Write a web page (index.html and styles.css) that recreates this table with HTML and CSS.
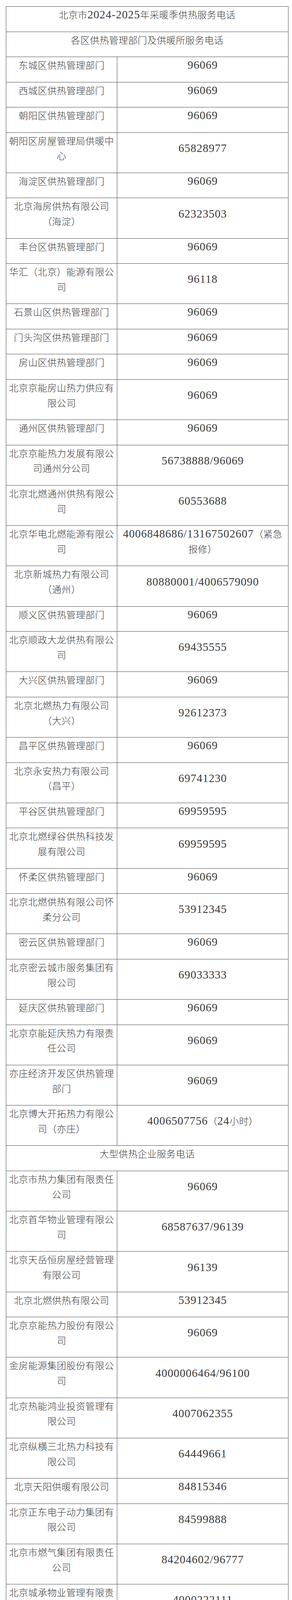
FILE: index.html
```html
<!DOCTYPE html>
<html lang="zh-CN">
<head>
<meta charset="utf-8">
<title>北京市2024-2025年采暖季供热服务电话</title>
<link rel="stylesheet" href="styles.css">
</head>
<body>
<div class="page">
<table class="phones">
<tbody>
<tr><td class="head" colspan="2">北京市<span class="n">2024-2025</span>年采暖季供热服务电话</td></tr>
<tr><td class="head" colspan="2">各区供热管理部门及供暖所服务电话</td></tr>
<tr><td class="name">东城区供热管理部门</td><td class="tel">96069</td></tr>
<tr><td class="name">西城区供热管理部门</td><td class="tel">96069</td></tr>
<tr><td class="name">朝阳区供热管理部门</td><td class="tel">96069</td></tr>
<tr><td class="name">朝阳区房屋管理局供暖中心</td><td class="tel">65828977</td></tr>
<tr><td class="name">海淀区供热管理部门</td><td class="tel">96069</td></tr>
<tr><td class="name">北京海房供热有限公司（海淀）</td><td class="tel">62323503</td></tr>
<tr><td class="name">丰台区供热管理部门</td><td class="tel">96069</td></tr>
<tr><td class="name">华汇（北京）能源有限公司</td><td class="tel">96118</td></tr>
<tr><td class="name">石景山区供热管理部门</td><td class="tel">96069</td></tr>
<tr><td class="name">门头沟区供热管理部门</td><td class="tel">96069</td></tr>
<tr><td class="name">房山区供热管理部门</td><td class="tel">96069</td></tr>
<tr><td class="name">北京京能房山热力供应有限公司</td><td class="tel">96069</td></tr>
<tr><td class="name">通州区供热管理部门</td><td class="tel">96069</td></tr>
<tr><td class="name">北京京能热力发展有限公司通州分公司</td><td class="tel">56738888/96069</td></tr>
<tr><td class="name">北京北燃通州供热有限公司</td><td class="tel">60553688</td></tr>
<tr><td class="name">北京华电北燃能源有限公司</td><td class="tel">4006848686/13167502607<span class="c">（紧急</span><span class="c">报修）</span></td></tr>
<tr><td class="name">北京新城热力有限公司（通州）</td><td class="tel">80880001/4006579090</td></tr>
<tr><td class="name">顺义区供热管理部门</td><td class="tel">96069</td></tr>
<tr><td class="name">北京顺政大龙供热有限公司</td><td class="tel">69435555</td></tr>
<tr><td class="name">大兴区供热管理部门</td><td class="tel">96069</td></tr>
<tr><td class="name">北京北燃热力有限公司（大兴）</td><td class="tel">92612373</td></tr>
<tr><td class="name">昌平区供热管理部门</td><td class="tel">96069</td></tr>
<tr><td class="name">北京永安热力有限公司（昌平）</td><td class="tel">69741230</td></tr>
<tr><td class="name">平谷区供热管理部门</td><td class="tel">69959595</td></tr>
<tr><td class="name">北京北燃绿谷供热科技发展有限公司</td><td class="tel">69959595</td></tr>
<tr><td class="name">怀柔区供热管理部门</td><td class="tel">96069</td></tr>
<tr><td class="name">北京北燃供热有限公司怀柔分公司</td><td class="tel">53912345</td></tr>
<tr><td class="name">密云区供热管理部门</td><td class="tel">96069</td></tr>
<tr><td class="name">北京密云城市服务集团有限公司</td><td class="tel">69033333</td></tr>
<tr><td class="name">延庆区供热管理部门</td><td class="tel">96069</td></tr>
<tr><td class="name">北京京能延庆热力有限责任公司</td><td class="tel">96069</td></tr>
<tr><td class="name">亦庄经济开发区供热管理部门</td><td class="tel">96069</td></tr>
<tr><td class="name">北京博大开拓热力有限公司（亦庄）</td><td class="tel">4006507756<span class="c">（</span>24<span class="c">小时）</span></td></tr>
<tr><td class="head" colspan="2">大型供热企业服务电话</td></tr>
<tr><td class="name">北京市热力集团有限责任公司</td><td class="tel">96069</td></tr>
<tr><td class="name">北京首华物业管理有限公司</td><td class="tel">68587637/96139</td></tr>
<tr><td class="name">北京天岳恒房屋经营管理有限公司</td><td class="tel">96139</td></tr>
<tr><td class="name">北京北燃供热有限公司</td><td class="tel">53912345</td></tr>
<tr><td class="name">北京京能热力股份有限公司</td><td class="tel">96069</td></tr>
<tr><td class="name">金房能源集团股份有限公司</td><td class="tel">4000006464/96100</td></tr>
<tr><td class="name">北京热能鸿业投资管理有限公司</td><td class="tel">4007062355</td></tr>
<tr><td class="name">北京纵横三北热力科技有限公司</td><td class="tel">64449661</td></tr>
<tr><td class="name">北京天阳供暖有限公司</td><td class="tel">84815346</td></tr>
<tr><td class="name">北京正东电子动力集团有限公司</td><td class="tel">84599888</td></tr>
<tr><td class="name">北京市燃气集团有限责任公司</td><td class="tel">84204602/96777</td></tr>
<tr><td class="name">北京城承物业管理有限责任公司</td><td class="tel">4000222111</td></tr>
<tr><td class="name">北京仁和热力中心</td><td class="tel">89451940</td></tr>
<tr><td class="name">北京天利动力供热有限公司</td><td class="tel">80460706</td></tr>
<tr><td class="name">北京嘉诚热力有限公司</td><td class="tel">69623579</td></tr>
<tr><td class="name">北京海融达新能源科技发展有限公司</td><td class="tel">4006905806</td></tr>
<tr><td class="head" colspan="2">北京市供热服务电话 <span class="n">96069</span></td></tr>
</tbody>
</table>
</div>
</body>
</html>
```
FILE: styles.css
```css
html, body {
  margin: 0;
  padding: 0;
  background: #ffffff;
}

.page {
  padding: 16px 0 0 15px;
}

.phones {
  width: 723px;
  border-collapse: collapse;
  color: #3a3a3a;
  font-family: "Noto Sans CJK SC", "Noto Sans CJK JP", sans-serif;
  font-size: 24px;
  font-weight: 300;
  letter-spacing: 0.4px;
  line-height: 38.75px;
  text-spacing-trim: space-all;
}

.phones td {
  border: 1px solid #4a4a4a;
  padding: 1px 5px 23.75px;
  text-align: center;
  vertical-align: middle;
}

.phones td.name {
  width: 273px;
}

.phones td.tel {
  font-family: "Liberation Serif", "Times New Roman", serif;
  font-size: 29px;
  font-weight: 400;
  letter-spacing: 1px;
}

.n {
  font-family: "Liberation Serif", "Times New Roman", serif;
  font-size: 29px;
  font-weight: 400;
  letter-spacing: 1px;
}

.c {
  font-family: "Noto Sans CJK SC", "Noto Sans CJK JP", sans-serif;
  font-size: 24px;
  font-weight: 300;
  letter-spacing: 0.4px;
}
```
